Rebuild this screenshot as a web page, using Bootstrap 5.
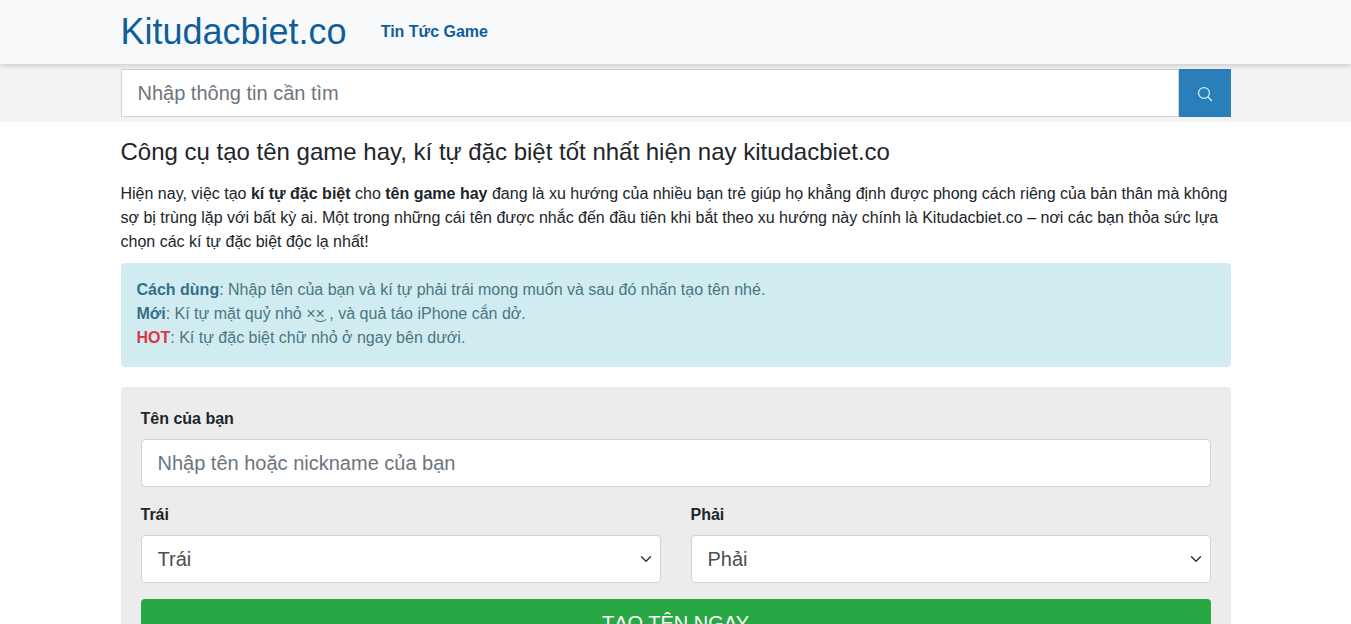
<!DOCTYPE html>
<html lang="vi">
<head>
<meta charset="utf-8">
<title>Kitudacbiet.co</title>
<link href="https://cdn.jsdelivr.net/npm/bootstrap@5.3.0/dist/css/bootstrap.min.css" rel="stylesheet">
<style>
:root { --bs-body-font-family: "Liberation Sans", Arial, sans-serif; }
html, body { height: 624px; overflow: hidden; }
body { font-family: "Liberation Sans", Arial, sans-serif; font-size: 16px; line-height: 24px; color: #212529; }
.wrap-x { width: 1140px; padding: 0 15px; margin: 0 auto; }
.top-bar { background: #f8f9fa; height: 64px; box-shadow: 0 2px 5px rgba(0,0,0,.16); position: relative; z-index: 2; }
.brand-x { font-size: 36px; line-height: 64px; color: #0f5e9c; text-decoration: none; }
.nav-x { margin-left: 34px; font-size: 16px; font-weight: 700; color: #0f5e9c; text-decoration: none; }
.search-band { background: #f3f3f3; height: 58px; padding-top: 5px; }
.field-x { height: 48px; font-size: 20px; line-height: 30px; padding: 8px 16px; border: 1px solid #ced4da; color: #495057; font-family: inherit; }
.field-x::placeholder { color: #6c757d; opacity: 1; }
.search-input { border-radius: 0; }
.search-btn { width: 52px; height: 48px; background: #2a7fba; border: 0; border-radius: 0; display: flex; align-items: center; justify-content: center; padding: 2px 0 0; flex: none; }
.title-x { font-size: 24px; line-height: 29px; font-weight: 400; margin: 15px 0 16px; color: #212529; }
.intro-x { margin: 0 0 9px; font-size: 16px; }
.note-x { background: #d1ecf1; color: #0c5460; opacity: 1; border-radius: 4px; padding: 15px 16px 17px; margin-bottom: 20px; }
.note-x span.txt, .note-x { color: #4a7682; }
.note-x b { color: #33708a; }
.note-x b.hot { color: #dc3545; }
.panel-x { background: #ececec; border-radius: 4px; padding: 20px; }
.label-x { font-weight: 700; display: block; margin-bottom: 8px; line-height: 24px; color: #212529; }
.panel-x .form-control.field-x { border-radius: 4px; }
.panel-x .form-select.field-x { border-radius: 4px; padding-left: 16px; background-position: right 6px center; }
.go-btn { display: block; width: 100%; height: 48px; background: #28a745; border: 0; border-radius: 4px; color: #fff; font-size: 20px; line-height: 30px; text-transform: uppercase; padding: 8px 16px; }
.col-gap-x { column-gap: 30px; }
</style>
</head>
<body>
<header class="top-bar">
  <div class="wrap-x d-flex align-items-center h-100">
    <a class="brand-x" href="#">Kitudacbiet.co</a>
    <a class="nav-x" href="#">Tin Tức Game</a>
  </div>
</header>
<div class="search-band">
  <div class="wrap-x">
    <div class="d-flex">
      <input class="form-control field-x search-input" type="text" placeholder="Nhập thông tin cần tìm">
      <button class="search-btn" type="button" aria-label="Tìm kiếm">
        <svg width="16" height="16" viewBox="0 0 16 16" fill="none" stroke="#d8eef9" stroke-width="1.2"><circle cx="7" cy="7" r="5.4"/><path d="M11 11l4 4"/></svg>
      </button>
    </div>
  </div>
</div>
<main class="wrap-x">
  <h1 class="title-x">Công cụ tạo tên game hay, kí tự đặc biệt tốt nhất hiện nay kitudacbiet.co</h1>
  <p class="intro-x">Hiện nay, việc tạo <b>kí tự đặc biệt</b> cho <b>tên game hay</b> đang là xu hướng của nhiều bạn trẻ giúp họ khẳng định được phong cách riêng của bản thân mà không sợ bị trùng lặp với bất kỳ ai. Một trong những cái tên được nhắc đến đầu tiên khi bắt theo xu hướng này chính là Kitudacbiet.co – nơi các bạn thỏa sức lựa chọn các kí tự đặc biệt độc lạ nhất!</p>
  <div class="note-x">
    <b>Cách dùng</b>: Nhập tên của bạn và kí tự phải trái mong muốn và sau đó nhấn tạo tên nhé.<br>
    <b>Mới</b>: Kí tự mặt quỷ nhỏ ×͜× , và quả táo iPhone cắn dở.<br>
    <b class="hot">HOT</b>: Kí tự đặc biệt chữ nhỏ ở ngay bên dưới.
  </div>
  <form class="panel-x">
    <label class="label-x" for="nm">Tên của bạn</label>
    <input id="nm" class="form-control field-x mb-3" type="text" placeholder="Nhập tên hoặc nickname của bạn">
    <div class="d-flex col-gap-x mb-3">
      <div class="flex-fill w-50">
        <label class="label-x" for="tr">Trái</label>
        <select id="tr" class="form-select field-x"><option>Trái</option></select>
      </div>
      <div class="flex-fill w-50">
        <label class="label-x" for="ph">Phải</label>
        <select id="ph" class="form-select field-x"><option>Phải</option></select>
      </div>
    </div>
    <button class="go-btn" type="button">Tạo tên ngay</button>
  </form>
</main>
<script src="https://cdn.jsdelivr.net/npm/bootstrap@5.3.0/dist/js/bootstrap.bundle.min.js"></script>
</body>
</html>
